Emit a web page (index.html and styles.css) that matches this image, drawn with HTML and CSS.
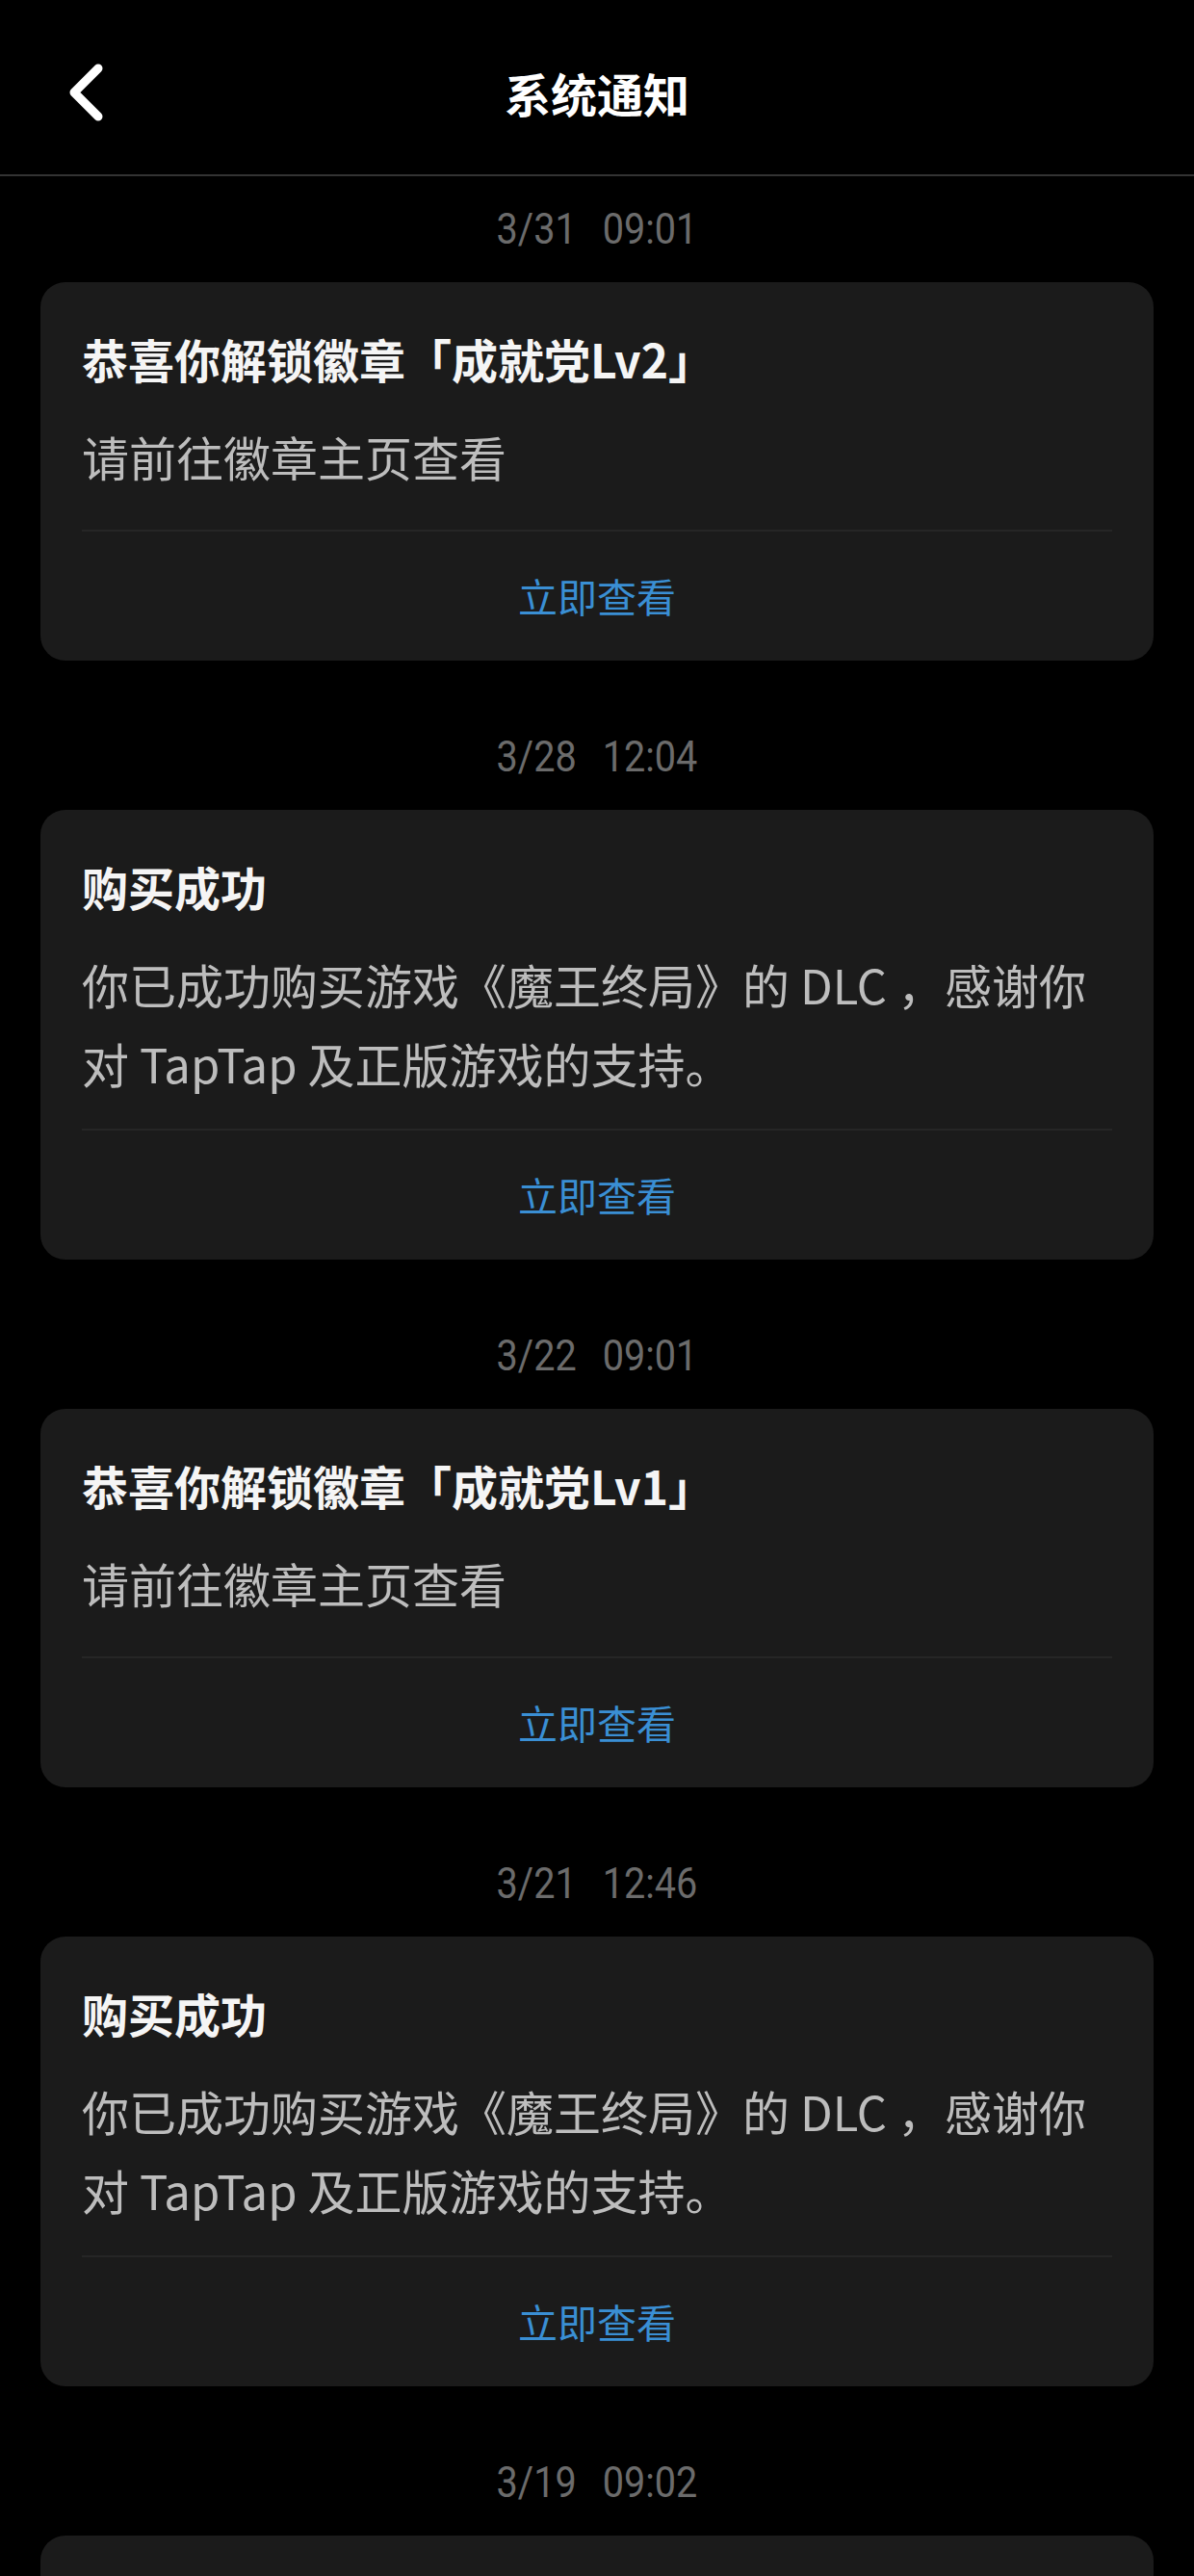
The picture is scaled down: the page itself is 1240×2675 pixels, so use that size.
FILE: index.html
```html
<!DOCTYPE html>
<html lang="zh-CN">
<head>
    <meta charset="UTF-8">
    <meta name="viewport" content="width=device-width, initial-scale=1.0">
    <title>系统通知</title>
    <link rel="stylesheet" href="styles.css">
</head>
<body>
    <header class="top-bar">
        <a href="#" class="back-button" aria-label="返回">
            <svg width="40" height="64" viewBox="0 0 40 64">
                <polyline points="32,7 7,32 32,57" fill="none" stroke="#fff" stroke-width="9" stroke-linecap="round" stroke-linejoin="round"/>
            </svg>
        </a>
        <h1>系统通知</h1>
        <span></span>
    </header>

    <main class="list">
        <div class="time"><span>3/31<span class="clock">09:01</span></span></div>
        <div class="card">
            <h2>恭喜你解锁徽章「成就党Lv2」</h2>
            <p class="card-body">请前往徽章主页查看</p>
            <a href="#" class="card-action">立即查看</a>
        </div>

        <div class="time"><span>3/28<span class="clock">12:04</span></span></div>
        <div class="card">
            <h2>购买成功</h2>
            <p class="card-body">你已成功购买游戏《魔王终局》的 DLC ，感谢你对 TapTap 及正版游戏的支持。</p>
            <a href="#" class="card-action">立即查看</a>
        </div>

        <div class="time"><span>3/22<span class="clock">09:01</span></span></div>
        <div class="card">
            <h2>恭喜你解锁徽章「成就党Lv1」</h2>
            <p class="card-body">请前往徽章主页查看</p>
            <a href="#" class="card-action">立即查看</a>
        </div>

        <div class="time"><span>3/21<span class="clock">12:46</span></span></div>
        <div class="card">
            <h2>购买成功</h2>
            <p class="card-body">你已成功购买游戏《魔王终局》的 DLC ，感谢你对 TapTap 及正版游戏的支持。</p>
            <a href="#" class="card-action">立即查看</a>
        </div>

        <div class="time"><span>3/19<span class="clock">09:02</span></span></div>
        <div class="card">
            <h2>恭喜你解锁徽章「成就党Lv1」</h2>
            <p class="card-body">请前往徽章主页查看</p>
            <a href="#" class="card-action">立即查看</a>
        </div>
    </main>
</body>
</html>
```

FILE: styles.css
```css
body {
    margin: 0;
    background-color: #000;
    color: #f2f2f2;
    font-family: "Noto Sans CJK SC", "Noto Sans", sans-serif;
}
.top-bar {
    display: grid;
    grid-template-columns: 1fr auto 1fr;
    align-items: center;
    height: 171px;
    padding-top: 10px;
    border-bottom: 2px solid #333;
}
.top-bar h1 {
    margin: 0;
    font-size: 48px;
    font-weight: 700;
    color: #fff;
}
.back-button {
    display: flex;
    margin-left: 70px;
    width: 40px;
}
.list {
    display: flex;
    flex-direction: column;
}
.time {
    height: 110px;
    display: flex;
    align-items: center;
    justify-content: center;
    font-family: Roboto, "Liberation Sans", sans-serif;
    font-size: 44px;
    color: #6b6b6b;
}
.time > span {
    display: inline-block;
    transform: scaleX(0.9); /* narrow digits like the app font */
}
.clock {
    margin-left: 30px;
}
.card {
    margin: 0 42px 45px;
    padding: 45px 43px 0;
    background-color: #1b1b1b;
    border-radius: 26px;
}
.card h2 {
    margin: 0 0 27px;
    font-size: 48px;
    line-height: 68px;
    font-weight: 700;
    color: #f5f5f5;
}
.card-body {
    margin: 0;
    min-height: 90px;
    padding: 0 12px 27px 0;
    font-size: 49px;
    line-height: 82px;
    color: #bdbdbd;
    border-bottom: 2px solid #262626;
}
.card-action {
    display: flex;
    align-items: center;
    justify-content: center;
    height: 132px;
    padding-bottom: 2px;
    font-size: 41px;
    color: #3a8fd4;
    text-decoration: none;
}
```
